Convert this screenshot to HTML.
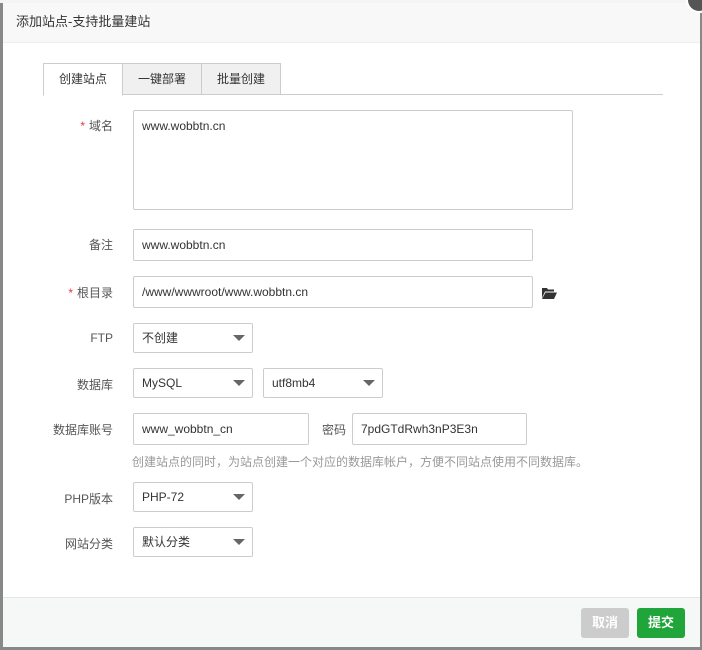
<!DOCTYPE html>
<html><head><meta charset="utf-8"><style>
*{box-sizing:border-box;margin:0;padding:0}
body{width:702px;height:650px;background:#888;position:relative;overflow:hidden;font-family:"Liberation Sans","Noto Sans CJK SC",sans-serif;font-size:12px;color:#555}
.top{position:absolute;left:0;top:0;width:702px;height:3px;background:#f4f4f4}
.dlg{position:absolute;left:3px;top:3px;width:697px;height:644px;background:#fff}
.hd{height:40px;background:#f8f8f8;border-bottom:1px solid #eee;padding-left:13px;line-height:38px;font-size:13px;color:#333}
.close{position:absolute;left:683px;top:-16px;width:26px;height:26px;border-radius:50%;background:#555;border:2px solid #fff}
.tabs{position:absolute;left:40px;top:60px;width:620px;height:32px;border-bottom:1px solid #ccc}
.tab{position:absolute;top:0;height:32px;width:80px;border:1px solid #ccc;background:#f0f0f0;text-align:center;line-height:30px;color:#333}
.tab.a{background:#fff;border-bottom:1px solid #fff;height:33px}
.lbl{position:absolute;width:110px;text-align:right;color:#555;font-size:12px}
.lbl i{color:#e33;font-style:normal;margin-right:4px}
.in{position:absolute;border:1px solid #ccc;border-radius:2px;padding-left:8px;color:#333;font-size:12px}
.sel:after{content:"";position:absolute;right:7px;top:50%;margin-top:-3px;border-left:6px solid transparent;border-right:6px solid transparent;border-top:6px solid #666}
.ft{position:absolute;left:0;top:594px;width:697px;height:50px;background:#f6f7f7;border-top:1px solid #e6e6e6}
.btn{position:absolute;top:10px;width:48px;height:30px;border-radius:3px;color:#fff;font-size:13px;text-align:center;line-height:30px;font-weight:bold}
</style></head><body>
<div class="top"></div>
<div class="dlg">
<div class="hd">添加站点-支持批量建站</div>
<div class="close"></div>
<div class="tabs">
<div class="tab a" style="left:0">创建站点</div>
<div class="tab" style="left:79px">一键部署</div>
<div class="tab" style="left:158px">批量创建</div>
</div>

<div class="lbl" style="left:0;top:114px"><i>*</i>域名</div>
<div class="in" style="left:130px;top:107px;width:440px;height:100px;padding-top:8px">www.wobbtn.cn</div>

<div class="lbl" style="left:0;top:233px">备注</div>
<div class="in" style="left:130px;top:226px;width:400px;height:32px;line-height:30px">www.wobbtn.cn</div>

<div class="lbl" style="left:0;top:281px"><i>*</i>根目录</div>
<div class="in" style="left:130px;top:273px;width:400px;height:32px;line-height:30px">/www/wwwroot/www.wobbtn.cn</div>
<svg style="position:absolute;left:539px;top:284px" width="15" height="12" viewBox="0 0 15 12"><path d="M0 1h5l1 1.5h6v2H3L0 11z" fill="#333"/><path d="M3.5 5.5H15L12 12H0z" fill="#333"/></svg>

<div class="lbl" style="left:0;top:328px">FTP</div>
<div class="in sel" style="left:130px;top:320px;width:120px;height:30px;line-height:28px">不创建</div>

<div class="lbl" style="left:0;top:373px">数据库</div>
<div class="in sel" style="left:130px;top:365px;width:120px;height:30px;line-height:28px">MySQL</div>
<div class="in sel" style="left:260px;top:365px;width:120px;height:30px;line-height:28px">utf8mb4</div>

<div class="lbl" style="left:0;top:418px">数据库账号</div>
<div class="in" style="left:130px;top:410px;width:176px;height:32px;line-height:30px">www_wobbtn_cn</div>
<div style="position:absolute;left:319px;top:418px">密码</div>
<div class="in" style="left:349px;top:410px;width:175px;height:32px;line-height:30px">7pdGTdRwh3nP3E3n</div>
<div style="position:absolute;left:129px;top:450px;color:#999">创建站点的同时，为站点创建一个对应的数据库帐户，方便不同站点使用不同数据库。</div>

<div class="lbl" style="left:0;top:487px">PHP版本</div>
<div class="in sel" style="left:130px;top:479px;width:120px;height:30px;line-height:28px">PHP-72</div>

<div class="lbl" style="left:0;top:532px">网站分类</div>
<div class="in sel" style="left:130px;top:524px;width:120px;height:30px;line-height:28px">默认分类</div>

<div class="ft">
<div class="btn" style="left:578px;background:#ccc">取消</div>
<div class="btn" style="left:634px;background:#20a53a">提交</div>
</div>
</div>
</body></html>
